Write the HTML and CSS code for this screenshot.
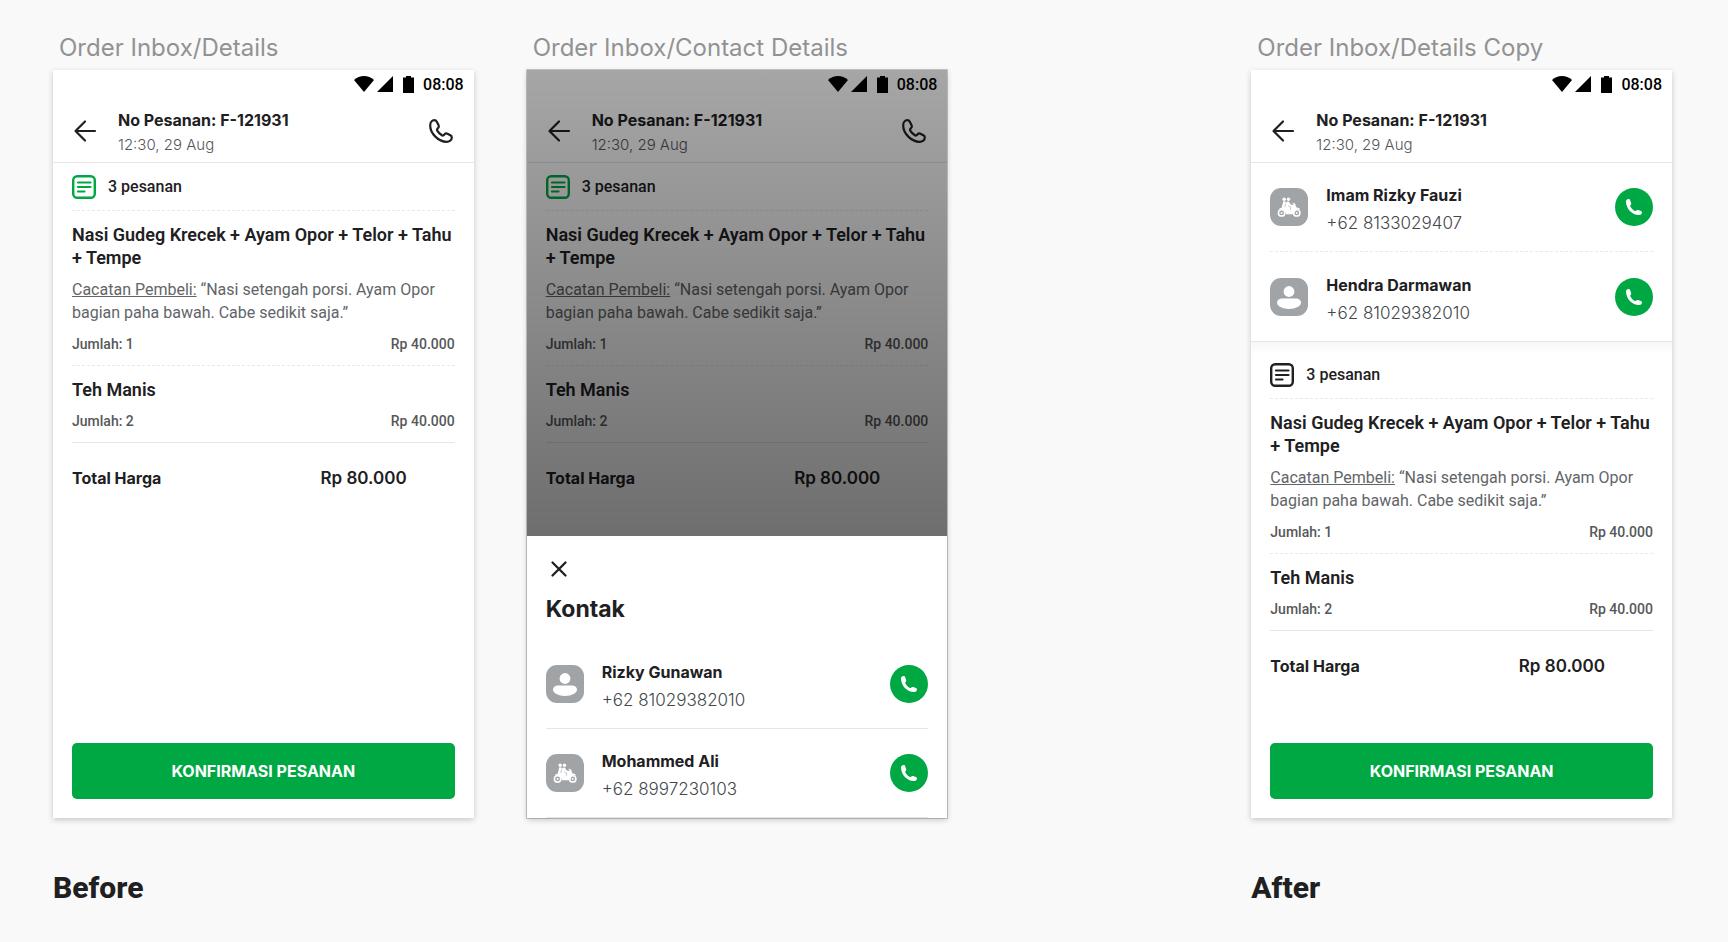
FILE: index.html
```
<!DOCTYPE html>
<html lang="id">
<head>
    <meta charset="UTF-8">
    <meta name="viewport" content="width=device-width, initial-scale=1">
    <title>Order Inbox</title>
    <link rel="stylesheet" href="styles.css">
</head>
<body>
    <!-- shared icons -->
    <svg class="sprite" aria-hidden="true">
        <symbol id="wifi" viewBox="0 0 20 16"><path d="M0 4C5.500-1.300 14.500-1.300 20 4L10 16z"/></symbol>
        <symbol id="signal" viewBox="0 0 16 16"><path d="M16 0v16H0z"/></symbol>
        <symbol id="battery" viewBox="0 0 11 17"><path d="M3 0h5v1.500h3V17H0V1.500h3z"/></symbol>
        <symbol id="back" viewBox="0 0 24 24"><path d="M22 12H3M12 2.500L2.500 12l9.500 9.500" fill="none" stroke="currentColor" stroke-width="2.200" stroke-linecap="round" stroke-linejoin="round"/></symbol>
        <symbol id="close" viewBox="0 0 24 24"><path d="M5.500 5.500l13 13M18.500 5.500l-13 13" fill="none" stroke="currentColor" stroke-width="2.300" stroke-linecap="round"/></symbol>
        <symbol id="phone" viewBox="0 0 24 24"><path d="M5.400 1.200C3 1.200 1.200 3.500 1.200 6.500c0 8 8.300 16.300 16.300 16.300 3 0 5.300-1.900 5.300-4.200 0-1.100-.5-1.800-1.400-2.300l-3-1.600c-1-.5-2-.3-2.800.5l-.9.9c-.6.5-1.200.6-1.800.2-1.900-1.200-3.500-2.800-4.700-4.700-.4-.6-.3-1.200.2-1.800l.7-.8c.8-.8 1-1.800.5-2.800L7.800 2.700c-.5-.9-1.300-1.500-2.400-1.500z" fill="none" stroke="currentColor" stroke-width="2.200" stroke-linejoin="round"/></symbol>
        <symbol id="order" viewBox="0 0 24 24"><rect x="1.200" y="1.200" width="21.600" height="21.600" rx="4" fill="none" stroke="currentColor" stroke-width="2.400"/><path d="M6 7.500h12.500M6 12h12.500M6 16.500h6.500" fill="none" stroke="currentColor" stroke-width="2.200" stroke-linecap="round"/></symbol>
        <symbol id="call" viewBox="0 0 38 38"><path d="M11 13.600c0-1.500 1.100-2.600 2.500-2.600.9 0 1.400.5 1.700 1.300l.9 2.600c.3.900.1 1.500-.6 2.200-.4.400-.4.900-.1 1.500 1 1.900 2.300 3.200 4.100 4.200.6.300 1.100.3 1.500-.1.700-.7 1.400-.9 2.300-.6l2.500 1c.9.400 1.300 1 1.100 1.800-.3 1.400-1.400 2.200-3 2.200C17 27.100 11 20.700 11 13.600z" fill="#fff"/></symbol>
        <symbol id="person" viewBox="0 0 38 38"><circle cx="19" cy="13.500" r="5.400" fill="#fff"/><path d="M12 20.500h14c3 0 5 1.900 5 4.300 0 3.300-5.300 6.200-12 6.200S7 28.100 7 24.800c0-2.400 2-4.300 5-4.300z" fill="#fff"/></symbol>
        <symbol id="rider" viewBox="0 0 38 38">
            <circle cx="11.600" cy="24.900" r="3.200" fill="none" stroke="#fff" stroke-width="1.500"/>
            <circle cx="26.700" cy="24.900" r="3.200" fill="none" stroke="#fff" stroke-width="1.500"/>
            <circle cx="11.600" cy="24.900" r="1" fill="#fff"/>
            <circle cx="26.700" cy="24.900" r="1" fill="#fff"/>
            <circle cx="14.200" cy="11.200" r="1.700" fill="#fff"/>
            <circle cx="18.500" cy="11.200" r="1.700" fill="#fff"/>
            <path d="M13.300 13.300l2.100.2.600 1.400.9-1.300 2.200.1 1.200 2.500 2.500.8 1.100-.9-1.500-.8.300-.8 2.700 1.200.1 1.900 1.200 1.900c1.800.1 3 .8 3.800 2.100-2.300-.7-4.100-.1-5 1.400l-1.600 3.300h-8c-.1-2.900-1.800-4.700-4.500-4.900-1 0-1.800.1-2.500.4.2-1.300 1.300-2 2.800-2.100z" fill="#fff"/>
            <path d="M18.200 17.600l2.600 1.600-.5 2.700M15.700 15.500l-.9 3.500" fill="none" stroke="#a1a4a6" stroke-width=".6"/>
        </symbol>
    </svg>

    <main class="board">
        <!-- order details -->
        <section class="frame">
            <h2 class="frame-name">Order Inbox/Details</h2>
            <div class="screen">
                <div class="status">
                    <svg class="wifi"><use href="#wifi"/></svg>
                    <svg class="signal"><use href="#signal"/></svg>
                    <svg class="battery"><use href="#battery"/></svg>
                    <span class="clock">08:08</span>
                </div>
                <header class="bar">
                    <button class="icon-btn" type="button" aria-label="Kembali"><svg class="icon"><use href="#back"/></svg></button>
                    <div class="bar-text">
                        <h3 class="bar-title">No Pesanan: F-121931</h3>
                        <p class="bar-date">12:30, 29 Aug</p>
                    </div>
                    <button class="icon-btn" type="button" aria-label="Telepon"><svg class="icon"><use href="#phone"/></svg></button>
                </header>
                <div class="order">
                    <div class="order-head"><svg class="icon green"><use href="#order"/></svg>3 pesanan</div>
                    <article class="item">
                        <h4 class="item-name">Nasi Gudeg Krecek + Ayam Opor + Telor + Tahu + Tempe</h4>
                        <p class="note"><u>Cacatan Pembeli:</u> “Nasi setengah porsi. Ayam Opor bagian paha bawah. Cabe sedikit saja.”</p>
                        <div class="qty"><span>Jumlah: 1</span><span>Rp 40.000</span></div>
                    </article>
                    <article class="item last">
                        <h4 class="item-name">Teh Manis</h4>
                        <div class="qty"><span>Jumlah: 2</span><span>Rp 40.000</span></div>
                    </article>
                    <div class="total"><span>Total Harga</span><span class="sum">Rp 80.000</span></div>
                </div>
                <button class="confirm" type="button">KONFIRMASI PESANAN</button>
            </div>
            <p class="caption">Before</p>
        </section>

        <!-- contact sheet opened over the order -->
        <section class="frame">
            <h2 class="frame-name">Order Inbox/Contact Details</h2>
            <div class="screen dimmed">
                <div class="status">
                    <svg class="wifi"><use href="#wifi"/></svg>
                    <svg class="signal"><use href="#signal"/></svg>
                    <svg class="battery"><use href="#battery"/></svg>
                    <span class="clock">08:08</span>
                </div>
                <header class="bar">
                    <button class="icon-btn" type="button" aria-label="Kembali"><svg class="icon"><use href="#back"/></svg></button>
                    <div class="bar-text">
                        <h3 class="bar-title">No Pesanan: F-121931</h3>
                        <p class="bar-date">12:30, 29 Aug</p>
                    </div>
                    <button class="icon-btn" type="button" aria-label="Telepon"><svg class="icon"><use href="#phone"/></svg></button>
                </header>
                <div class="order">
                    <div class="order-head"><svg class="icon green"><use href="#order"/></svg>3 pesanan</div>
                    <article class="item">
                        <h4 class="item-name">Nasi Gudeg Krecek + Ayam Opor + Telor + Tahu + Tempe</h4>
                        <p class="note"><u>Cacatan Pembeli:</u> “Nasi setengah porsi. Ayam Opor bagian paha bawah. Cabe sedikit saja.”</p>
                        <div class="qty"><span>Jumlah: 1</span><span>Rp 40.000</span></div>
                    </article>
                    <article class="item last">
                        <h4 class="item-name">Teh Manis</h4>
                        <div class="qty"><span>Jumlah: 2</span><span>Rp 40.000</span></div>
                    </article>
                    <div class="total"><span>Total Harga</span><span class="sum">Rp 80.000</span></div>
                </div>
                <div class="overlay"></div>
                <div class="sheet">
                    <button class="icon-btn" type="button" aria-label="Tutup"><svg class="icon"><use href="#close"/></svg></button>
                    <h3 class="sheet-title">Kontak</h3>
                    <ul class="contacts">
                        <li class="contact">
                            <svg class="avatar"><use href="#person"/></svg>
                            <div class="contact-text">
                                <p class="contact-name">Rizky Gunawan</p>
                                <p class="contact-no">+62 81029382010</p>
                            </div>
                            <button class="call" type="button" aria-label="Telepon Rizky Gunawan"><svg class="call-icon"><use href="#call"/></svg></button>
                        </li>
                        <li class="contact">
                            <svg class="avatar"><use href="#rider"/></svg>
                            <div class="contact-text">
                                <p class="contact-name">Mohammed Ali</p>
                                <p class="contact-no">+62 8997230103</p>
                            </div>
                            <button class="call" type="button" aria-label="Telepon Mohammed Ali"><svg class="call-icon"><use href="#call"/></svg></button>
                        </li>
                    </ul>
                </div>
            </div>
        </section>

        <!-- contacts placed inside the order -->
        <section class="frame after">
            <h2 class="frame-name">Order Inbox/Details Copy</h2>
            <div class="screen">
                <div class="status">
                    <svg class="wifi"><use href="#wifi"/></svg>
                    <svg class="signal"><use href="#signal"/></svg>
                    <svg class="battery"><use href="#battery"/></svg>
                    <span class="clock">08:08</span>
                </div>
                <header class="bar">
                    <button class="icon-btn" type="button" aria-label="Kembali"><svg class="icon"><use href="#back"/></svg></button>
                    <div class="bar-text">
                        <h3 class="bar-title">No Pesanan: F-121931</h3>
                        <p class="bar-date">12:30, 29 Aug</p>
                    </div>
                </header>
                <ul class="contacts inline">
                    <li class="contact">
                        <svg class="avatar"><use href="#rider"/></svg>
                        <div class="contact-text">
                            <p class="contact-name">Imam Rizky Fauzi</p>
                            <p class="contact-no">+62 8133029407</p>
                        </div>
                        <button class="call" type="button" aria-label="Telepon Imam Rizky Fauzi"><svg class="call-icon"><use href="#call"/></svg></button>
                    </li>
                    <li class="contact">
                        <svg class="avatar"><use href="#person"/></svg>
                        <div class="contact-text">
                            <p class="contact-name">Hendra Darmawan</p>
                            <p class="contact-no">+62 81029382010</p>
                        </div>
                        <button class="call" type="button" aria-label="Telepon Hendra Darmawan"><svg class="call-icon"><use href="#call"/></svg></button>
                    </li>
                </ul>
                <div class="order shaded">
                    <div class="order-head"><svg class="icon"><use href="#order"/></svg>3 pesanan</div>
                    <article class="item">
                        <h4 class="item-name">Nasi Gudeg Krecek + Ayam Opor + Telor + Tahu + Tempe</h4>
                        <p class="note"><u>Cacatan Pembeli:</u> “Nasi setengah porsi. Ayam Opor bagian paha bawah. Cabe sedikit saja.”</p>
                        <div class="qty"><span>Jumlah: 1</span><span>Rp 40.000</span></div>
                    </article>
                    <article class="item last">
                        <h4 class="item-name">Teh Manis</h4>
                        <div class="qty"><span>Jumlah: 2</span><span>Rp 40.000</span></div>
                    </article>
                    <div class="total"><span>Total Harga</span><span class="sum">Rp 80.000</span></div>
                </div>
                <button class="confirm" type="button">KONFIRMASI PESANAN</button>
            </div>
            <p class="caption">After</p>
        </section>
    </main>
</body>
</html>
```
FILE: styles.css
```
*{
    margin: 0;
    padding: 0;
    box-sizing: border-box;
}

body{
    background-color: #f9f9f9;
    color: #1e2022;
    font-family: Roboto, "Liberation Sans", sans-serif;
}

button{
    border: none;
    background: none;
    color: inherit;
    cursor: pointer;
}

svg{
    display: block;
    flex: none;
}

.sprite{
    display: none;
}

/* three phones, the third column is the empty space before "After" */
.board{
    display: grid;
    grid-template-columns: 1fr 1fr 198px 1fr;
    column-gap: 53px;
    align-items: start;
    padding: 34px 56px 36px 53px;
}

.after{
    grid-column: 4;
}

.frame-name{
    margin-bottom: 8px;
    padding-left: 6px;
    color: #929292;
    font: 400 24px/28px Inter, sans-serif;
    white-space: nowrap;
}

.screen{
    display: flex;
    flex-direction: column;
    position: relative;
    min-height: 748px;
    background-color: #fff;
    box-shadow: 0 2px 6px rgba(0, 0, 0, .2);
}

.dimmed{
    box-shadow: 0 0 0 1px rgba(0, 0, 0, .2), 0 2px 6px rgba(0, 0, 0, .2);
}

.caption{
    margin-top: 52px;
    font-size: 30px;
    font-weight: 800;
    line-height: 36px;
}

/* status bar */
.status{
    display: flex;
    align-items: center;
    justify-content: flex-end;
    height: 28px;
    padding-right: 10px;
    color: #000;
}

.wifi{
    width: 20px;
    height: 16px;
    margin-right: 3px;
}

.signal{
    width: 16px;
    height: 16px;
    margin-right: 10px;
}

.battery{
    width: 11px;
    height: 17px;
    margin-right: 9px;
}

.clock{
    font-size: 16px;
    font-weight: 500;
}

/* app bar */
.bar{
    display: flex;
    align-items: center;
    gap: 21px;
    padding: 8px 21px 7px 20px;
    border-bottom: 1px solid #e6e6e6;
}

.icon-btn,
.icon{
    width: 24px;
    height: 24px;
}

.bar-text{
    flex: 1;
    padding-top: 2px;
}

.bar-title{
    font: 700 16px/24px Inter, sans-serif;
}

.bar-date{
    margin-top: 3px;
    color: #55585a;
    font: 300 15px/20px Inter, sans-serif;
}

/* order */
.order{
    padding: 0 19px;
}

.shaded{
    padding-top: 9px;
    background: linear-gradient(#f7f7f7, #fff 12px);
}

.order-head{
    display: flex;
    align-items: center;
    gap: 12px;
    height: 48px;
    border-bottom: 1px dashed #e9e9e9;
    font-size: 16px;
    font-weight: 500;
}

.green{
    color: #00a843;
}

.item{
    padding: 12px 0 11px;
    border-bottom: 1px dashed #e9e9e9;
}

.last{
    border-bottom: 1px solid #e6e6e6;
}

.item-name{
    font-size: 18px;
    font-weight: 600;
    line-height: 23px;
}

.note{
    margin: 9px 0 1px;
    color: #626568;
    font-size: 16px;
    line-height: 23px;
}

.qty{
    display: flex;
    justify-content: space-between;
    margin-top: 10px;
    color: #55585a;
    font-size: 14px;
    font-weight: 500;
    line-height: 20px;
}

.total{
    display: flex;
    justify-content: space-between;
    padding: 23px 48px 23px 0;
    font: 700 16px/24px Inter, sans-serif;
}

.sum{
    font-size: 17px;
    font-weight: 600;
}

.confirm{
    height: 56px;
    margin: auto 19px 19px;
    border-radius: 5px;
    background-color: #00a843;
    color: #fff;
    font: 700 16px/24px Inter, sans-serif;
}

/* contact sheet */
.overlay{
    position: absolute;
    inset: 0;
    background: linear-gradient(rgba(0, 0, 0, .35), rgba(0, 0, 0, .57) 466px);
}

.sheet{
    position: absolute;
    left: 0;
    right: 0;
    bottom: 0;
    padding: 21px 0 0;
    background-color: #fff;
}

.sheet .icon-btn{
    display: block;
    margin-left: 20px;
}

.sheet-title{
    margin: 13px 19px 16px;
    font: 700 23px/30px Inter, sans-serif;
}

.contacts{
    padding: 0 19px;
    list-style: none;
}

.contact{
    display: flex;
    align-items: center;
    gap: 18px;
    height: 89px;
    border-bottom: 1px solid #e6e6e6;
}

.inline{
    border-bottom: 1px solid #e6e6e6;
}

.inline .contact{
    border-bottom: 1px dashed #e9e9e9;
}

.inline .contact:last-child{
    border-bottom: none;
}

.avatar{
    width: 38px;
    height: 38px;
    border-radius: 11px;
    background-color: #a1a4a6;
}

.contact-text{
    flex: 1;
    padding-top: 4px;
}

.contact-name{
    font: 700 16px/24px Inter, sans-serif;
}

.contact-no{
    margin-top: 4px;
    color: #44474a;
    font: 300 17px/24px Inter, sans-serif;
}

.call{
    width: 38px;
    height: 38px;
    border-radius: 50%;
    background-color: #00a843;
}

.call-icon{
    width: 38px;
    height: 38px;
}
```
